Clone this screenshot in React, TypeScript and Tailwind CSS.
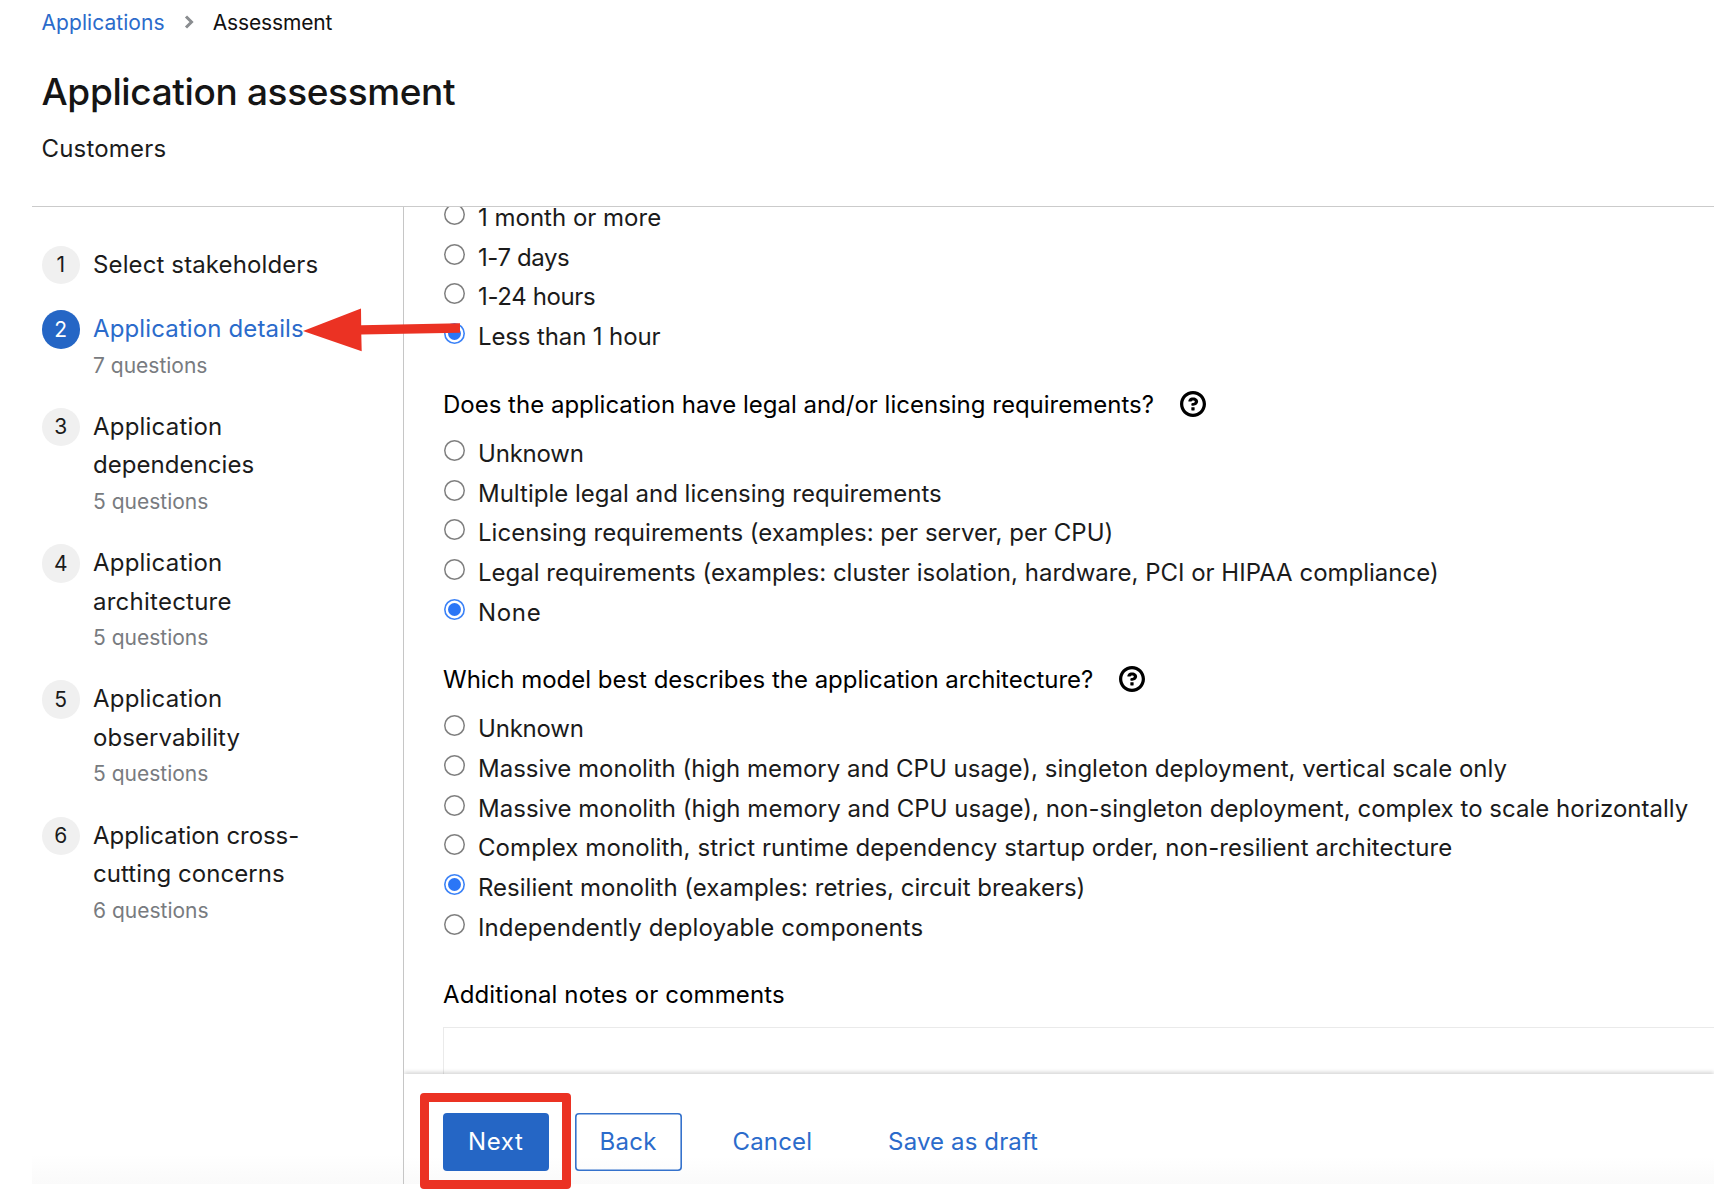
import clsx from "clsx";

type Step = { n: number; lines: { text: string; tracking: string }[]; questions?: number };
type Option = { label: string; tracking?: string; checked?: boolean };

const steps: Step[] = [
  { n: 1, lines: [{ text: "Select stakeholders", tracking: "tracking-[0.12px]" }] },
  { n: 2, lines: [{ text: "Application details", tracking: "tracking-[0.126px]" }], questions: 7 },
  {
    n: 3,
    lines: [
      { text: "Application", tracking: "tracking-[0.2px]" },
      { text: "dependencies", tracking: "tracking-[0.051px]" },
    ],
    questions: 5,
  },
  {
    n: 4,
    lines: [
      { text: "Application", tracking: "tracking-[0.2px]" },
      { text: "architecture", tracking: "tracking-[0.243px]" },
    ],
    questions: 5,
  },
  {
    n: 5,
    lines: [
      { text: "Application", tracking: "tracking-[0.2px]" },
      { text: "observability", tracking: "tracking-[0.087px]" },
    ],
    questions: 5,
  },
  {
    n: 6,
    lines: [
      { text: "Application cross-", tracking: "tracking-[-0.05px]" },
      { text: "cutting concerns", tracking: "tracking-[0.063px]" },
    ],
    questions: 6,
  },
];

const downtime: Option[] = [
  { label: "1 month or more" },
  { label: "1-7 days", tracking: "tracking-[-0.415px]" },
  { label: "1-24 hours", tracking: "tracking-[-0.368px]" },
  { label: "Less than 1 hour", tracking: "tracking-[-0.126px]", checked: true },
];

const legal: Option[] = [
  { label: "Unknown", tracking: "tracking-[-0.2px]" },
  { label: "Multiple legal and licensing requirements" },
  { label: "Licensing requirements (examples: per server, per CPU)", tracking: "tracking-[0.012px]" },
  {
    label: "Legal requirements (examples: cluster isolation, hardware, PCI or HIPAA compliance)",
  },
  { label: "None", tracking: "tracking-[0.7px]", checked: true },
];

const architecture: Option[] = [
  { label: "Unknown", tracking: "tracking-[-0.2px]" },
  { label: "Massive monolith (high memory and CPU usage), singleton deployment, vertical scale only" },
  {
    label: "Massive monolith (high memory and CPU usage), non-singleton deployment, complex to scale horizontally",
    tracking: "tracking-[0.02px]",
  },
  {
    label: "Complex monolith, strict runtime dependency startup order, non-resilient architecture",
    tracking: "tracking-[0.075px]",
  },
  {
    label: "Resilient monolith (examples: retries, circuit breakers)",
    checked: true,
  },
  { label: "Independently deployable components", tracking: "tracking-[0.12px]" },
];

function HelpIcon() {
  return (
    <svg viewBox="0 0 1024 1024" className="mb-[2px] size-[26px] shrink-0 fill-black" aria-hidden="true">
      <path d="M521.3,576 C627.5,576 713.7,502 713.7,413.7 C713.7,325.4 627.6,253.6 521.3,253.6 C366,253.6 334.5,337.7 329.2,407.2 C329.2,414.3 335.2,416 343.5,416 L445,416 C450.5,416 458,415.5 460.8,406.5 C460.8,362.6 582.9,357.1 582.9,413.6 C582.9,441.9 556.2,470.9 521.3,473 C486.4,475.1 447.3,479.8 447.3,521.7 L447.3,553.8 C447.3,570.8 456.1,576 472,576 Z M575.3,751.3 L575.3,655.3 C575.3,646 568,639.3 559.3,639.3 L463.3,639.3 C454,639.3 447.3,646 447.3,655.3 L447.3,751.3 C447.3,760 454,767.3 463.3,767.3 L559.3,767.3 C568,767.3 575.3,760 575.3,751.3 Z M512,896 C300.2,896 128,723.9 128,512 C128,300.3 300.2,128 512,128 C723.8,128 896,300.2 896,512 C896,723.8 723.7,896 512,896 M512.1,0 C229.7,0 0,229.8 0,512 C0,794.2 229.8,1024 512.1,1024 C794.4,1024 1024,794.3 1024,512 C1024,229.7 794.4,0 512.1,0 Z" />
    </svg>
  );
}

function Radio({ checked }: { checked?: boolean }) {
  return (
    <span
      className={clsx(
        "mb-[6px] ml-[1px] flex size-[21px] shrink-0 items-center justify-center rounded-full bg-white",
        checked ? "shadow-[inset_0_0_0_1.6px_#3b82f7]" : "shadow-[inset_0_0_0_1.5px_#7f7f7f]",
      )}
      role="radio"
      aria-checked={!!checked}
    >
      {checked && <span className="size-[13px] rounded-full bg-[#2b76f6]" />}
    </span>
  );
}

function Options({ items }: { items: Option[] }) {
  return (
    <div role="radiogroup">
      {items.map((o) => (
        <div key={o.label} className="flex h-[39.75px] items-center">
          <Radio checked={o.checked} />
          <span className={clsx("mt-[1px] ml-[13px] leading-[20px] whitespace-nowrap", o.tracking)}>{o.label}</span>
        </div>
      ))}
    </div>
  );
}

function Question({ text, tracking }: { text: string; tracking?: string }) {
  return (
    <div className="mb-[11px] flex h-[36px] items-center gap-[26px] text-black">
      <span className={clsx("whitespace-nowrap", tracking)}>{text}</span>
      <HelpIcon />
    </div>
  );
}

function Nav() {
  return (
    <nav className="flex w-[372px] shrink-0 flex-col gap-[25px] border-r border-[#c6c6c6] pt-[38.5px] pl-[9.5px]">
      {steps.map((s) => (
        <div key={s.n} className={clsx("flex gap-[13px]", s.n === 1 && "mb-[1px]")}>
          <span
            className={clsx(
              "flex size-[38.5px] shrink-0 items-center justify-center rounded-full text-[21px]",
              s.n === 2 ? "bg-[#2566c5] text-white" : "bg-[#f0f0f0]",
            )}
          >
            {s.n}
          </span>
          <div className="flex flex-col whitespace-nowrap">
            {s.lines.map((l) => (
              <span
                key={l.text}
                className={clsx("h-[38.5px] leading-[38.5px]", l.tracking, s.n === 2 && "text-[#2b6bcb]")}
              >
                {l.text}
              </span>
            ))}
            {s.questions && (
              <span className="h-[34.3px] text-[21px] leading-[34.3px] text-[#787b80]">{s.questions} questions</span>
            )}
          </div>
        </div>
      ))}
    </nav>
  );
}

function Footer() {
  return (
    <footer className="relative flex h-[110px] shrink-0 items-start bg-linear-to-b from-white from-75% to-[#fafafa] pt-[38.5px] pl-[39px] shadow-[0_-2px_4px_rgba(0,0,0,0.16)]">
      <button className="flex h-[58px] w-[105.5px] items-center rounded-[4px] bg-[#2566c5] pl-[25px] tracking-[0.6px] text-white">
        Next
      </button>
      <button className="ml-[26px] flex h-[58px] w-[107.5px] items-center rounded-[4px] pl-[25px] tracking-[0.25px] text-[#2b6bcb] shadow-[inset_0_0_0_1.6px_#3572cc]">
        Back
      </button>
      <button className="ml-[50.5px] h-[58px] tracking-[0.15px] text-[#2b6bcb]">Cancel</button>
      <button className="ml-[76px] h-[58px] tracking-[0.129px] text-[#2b6bcb]">Save as draft</button>
    </footer>
  );
}

export default function App() {
  return (
    <div className="relative flex h-[1194px] w-[1728px] flex-col overflow-hidden bg-white font-['Inter',sans-serif] text-[24px] text-[#1b1b1b]">
      <header className="flex h-[206px] shrink-0 flex-col pl-[41.5px]">
        <div className="flex h-[46px] items-center text-[21px]">
          <a className="tracking-[0.06px] text-[#2b6bcb]">Applications</a>
          <svg viewBox="0 0 10 14" className="mr-[19px] mb-[3px] ml-[19px] h-[14px] w-[10px]" aria-hidden="true">
            <path d="M2 1.5 L7.5 7 L2 12.5" fill="none" stroke="#8a8d90" strokeWidth="3" />
          </svg>
          <span className="tracking-[-0.13px] text-[#111]">Assessment</span>
        </div>
        <h1 className="mt-[15.5px] text-[37px] leading-[60px] font-medium tracking-[-0.359px] text-[#151515]">
          Application assessment
        </h1>
        <p className="mt-[7.5px] leading-[40px] tracking-[0.194px]">Customers</p>
      </header>

      <div className="ml-[32px] flex h-[978px] w-[1682px] shrink-0 border-t border-[#cbcbcb] bg-linear-to-b from-white from-97% to-[#fafafa]">
        <Nav />
        <section className="flex min-w-0 flex-1 flex-col overflow-hidden">
          <div className="min-h-0 flex-1 overflow-hidden pl-[39px]">
            <div className="-mt-[9.5px] flex flex-col">
              <Options items={downtime} />
              <div className="mt-[30px]">
                <Question text="Does the application have legal and/or licensing requirements?" />
                <Options items={legal} />
              </div>
              <div className="mt-[29.5px]">
                <Question
                  text="Which model best describes the application architecture?"
                  tracking="tracking-[-0.015px]"
                />
                <Options items={architecture} />
              </div>
              <div className="mt-[29.5px] leading-[36px] tracking-[0.121px] text-black">
                Additional notes or comments
              </div>
              <div className="mt-[14px] h-[90px] border-t border-l border-[#eaeaea]" />
            </div>
          </div>
          <Footer />
        </section>
      </div>

      <svg viewBox="0 0 158 44" className="absolute top-[308px] left-[303px] h-[44px] w-[158px]" aria-hidden="true">
        <path d="M0 23 L58 0.5 L58.2 17.2 L157 15.3 L157 24.8 L58.3 26.5 L58.7 43.2 Z" fill="#eb3223" />
      </svg>
      <div className="absolute top-[1093px] left-[420px] h-[95.5px] w-[150.5px] rounded-[4px] border-[9px] border-[#eb3223]" />
    </div>
  );
}
